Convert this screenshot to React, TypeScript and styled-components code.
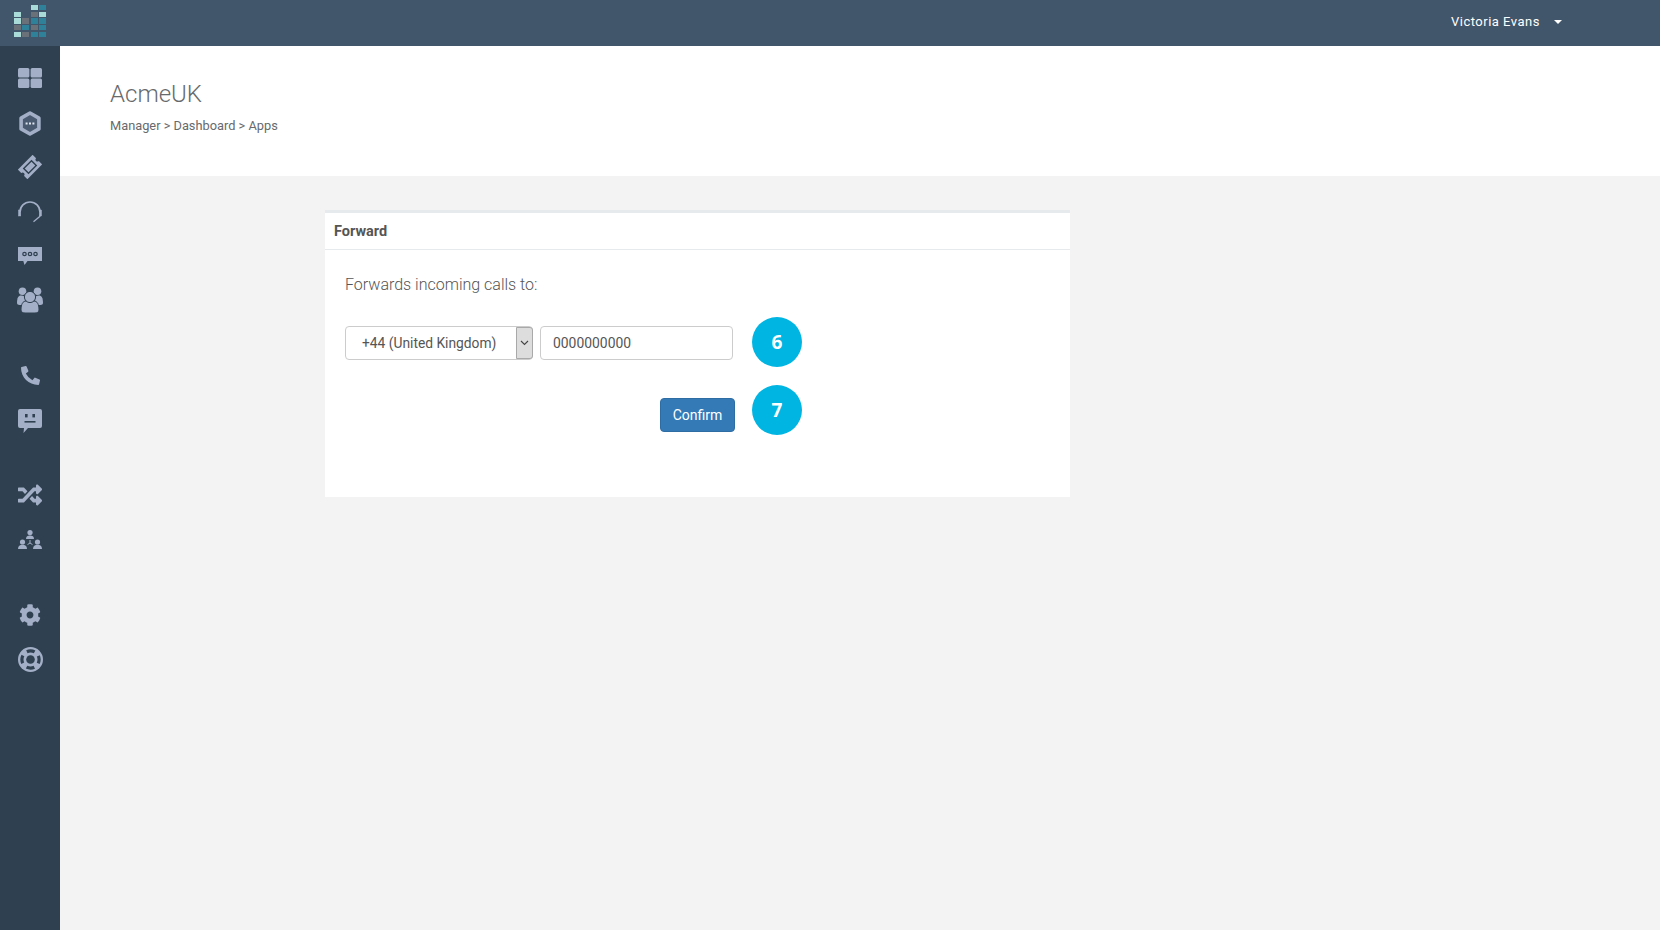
import React from "react";
import styled, { createGlobalStyle } from "styled-components";
import { FaCog, FaPhoneAlt, FaRandom } from "react-icons/fa";

const GlobalStyle = createGlobalStyle`
  html, body {
    margin: 0;
    padding: 0;
    height: 100%;
    overflow: hidden;
    background: #f3f3f4;
    font-family: Roboto, "Liberation Sans", sans-serif;
  }
`;

const Page = styled.div`
  display: flex;
  flex-direction: column;
  height: 930px;
`;

const TopBar = styled.header`
  flex: 0 0 46px;
  display: flex;
  align-items: center;
  justify-content: space-between;
  background: #42566b;
  padding-left: 14px;
  padding-right: 98px;
`;

const LogoGrid = styled.div`
  display: grid;
  grid-template-columns: repeat(4, 7px);
  grid-auto-rows: 5.5px;
  column-gap: 1.4px;
  row-gap: 1.2px;
  margin-bottom: 4px;
`;

const LogoCell = styled.span<{ $tone: string }>`
  background: ${(p) => p.$tone};
`;

const UserMenu = styled.div`
  display: flex;
  align-items: center;
  gap: 14px;
  margin-bottom: 3px;
  color: #fff;
  font-size: 13px;
  letter-spacing: 0.5px;
`;

const Caret = styled.span`
  width: 0;
  height: 0;
  border-left: 4px solid transparent;
  border-right: 4px solid transparent;
  border-top: 4px solid #fff;
`;

const Body = styled.div`
  flex: 1;
  display: flex;
  min-height: 0;
`;

const Sidebar = styled.nav`
  flex: 0 0 60px;
  display: flex;
  flex-direction: column;
  gap: 31px;
  padding-top: 10px;
  background: #2f4050;
`;

const NavGroup = styled.div`
  display: flex;
  flex-direction: column;
`;

const NavItem = styled.a`
  height: 44.4px;
  display: flex;
  align-items: center;
  justify-content: center;
  color: #a3afc6;
`;

const Main = styled.main`
  flex: 1;
  display: flex;
  flex-direction: column;
`;

const PageHeader = styled.div`
  height: 130px;
  box-sizing: border-box;
  padding: 33px 50px 0;
  background: #fff;
  color: #676a6c;
`;

const Title = styled.h1`
  margin: 0;
  font-size: 24px;
  font-weight: 300;
  line-height: 30px;
`;

const Breadcrumb = styled.div`
  margin-top: 8px;
  font-size: 12.8px;
  line-height: 18px;
`;

const Content = styled.div`
  padding: 34px 0 0 265px;
`;

const Card = styled.section`
  width: 745px;
  height: 287px;
  box-sizing: border-box;
  background: #fff;
  border-top: 3px solid #e7eaec;
`;

const CardTitle = styled.div`
  height: 37px;
  box-sizing: border-box;
  padding-left: 9px;
  border-bottom: 1px solid #e7eaec;
  font-size: 14.5px;
  font-weight: 700;
  line-height: 37px;
  color: #555;
`;

const CardBody = styled.div`
  padding: 24px 0 0 20px;
  color: #555;
`;

const Lead = styled.p`
  margin: 0 0 23px;
  font-size: 16px;
  font-weight: 300;
  line-height: 22px;
`;

const FieldRow = styled.div`
  display: flex;
  align-items: center;
`;

const ActionRow = styled.div`
  display: flex;
  align-items: flex-start;
  margin-top: 18px;
  padding-left: 315px;
`;

const SelectBox = styled.div`
  width: 188px;
  height: 34px;
  box-sizing: border-box;
  display: flex;
  border: 1px solid #ccc;
  border-radius: 4px;
  font-size: 13.8px;
  color: #555;
`;

const SelectValue = styled.div`
  flex: 1;
  padding-left: 16px;
  line-height: 32px;
`;

const SelectArrow = styled.div`
  width: 17px;
  box-sizing: border-box;
  display: flex;
  align-items: center;
  justify-content: center;
  background: #ddd;
  border: 1px solid #a9a9a9;
  border-radius: 0 3px 3px 0;
  margin: 0 -1px 0 0;
`;

const NumberInput = styled.input`
  width: 193px;
  height: 34px;
  box-sizing: border-box;
  margin-left: 7px;
  padding: 0 12px;
  border: 1px solid #ccc;
  border-radius: 4px;
  font-family: inherit;
  font-size: 13.9px;
  color: #555;
`;

const Badge = styled.div`
  flex: 0 0 50px;
  height: 50px;
  display: flex;
  align-items: center;
  justify-content: center;
  border-radius: 50%;
  background: #00b5e2;
  color: #fff;
  font-family: "Open Sans", sans-serif;
  font-size: 19px;
  font-weight: 700;
`;

const FieldBadge = styled(Badge)`
  margin-left: 19px;
  margin-top: -2px;
`;

const ActionBadge = styled(Badge)`
  margin-left: 17px;
`;

const ConfirmButton = styled.button`
  width: 75px;
  height: 34px;
  margin-top: 13px;
  padding: 0;
  background: #337ab7;
  border: 1px solid #2e6da4;
  border-radius: 4px;
  color: #fff;
  font-family: inherit;
  font-size: 14px;
`;

const L = "#a9dcd9";
const G = "#6b7178";
const T = "#2f8199";
const logoCells = [
  "", "", L, T,
  L, "", G, L,
  L, G, T, T,
  G, T, G, T,
  L, G, T, T,
];

const BG = "#2f4050";

const DashboardIcon = () => (
  <svg width="24" height="20" viewBox="0 0 24 20" fill="currentColor">
    <rect x="0" y="0" width="11.4" height="9.4" rx="1.5" />
    <rect x="12.6" y="0" width="11.4" height="9.4" rx="1.5" />
    <rect x="0" y="10.6" width="11.4" height="9.4" rx="1.5" />
    <rect x="12.6" y="10.6" width="11.4" height="9.4" rx="1.5" />
  </svg>
);

const HexIcon = () => (
  <svg width="22" height="27" viewBox="0 -2 22 27">
    <path d="M11 2 19.9 7.1v10.8L11 23 2.1 17.9V7.1z" fill="#4a5a70" stroke="currentColor" strokeWidth="3.6" strokeLinejoin="round" />
    <g fill="#dfe5ef">
      <rect x="6.6" y="11.5" width="2" height="2" />
      <rect x="10" y="11.5" width="2" height="2" />
      <rect x="13.4" y="11.5" width="2" height="2" />
    </g>
  </svg>
);

const TicketIcon = () => (
  <svg width="24" height="24" viewBox="0 0 24 24" fill="none">
    <g transform="rotate(-45 12 12)">
      <path
        d="M1.5 5.2h21v4.9a1.9 1.9 0 0 0 0 3.8v4.9h-21v-4.9a1.9 1.9 0 0 0 0-3.8z"
        fill="currentColor"
      />
      <rect x="6.5" y="8.6" width="11" height="6.8" stroke={BG} strokeWidth="1.4" />
    </g>
  </svg>
);

const HeadsetIcon = () => (
  <svg width="24" height="24" viewBox="0 -2 24 24" fill="none" stroke="currentColor">
    <path d="M2 11A10 10 0 0 1 22 11" strokeWidth="1.7" />
    <rect x="0.4" y="9" width="2.4" height="6" fill="currentColor" strokeWidth="0.4" />
    <rect x="21.2" y="9" width="2.4" height="6" fill="currentColor" strokeWidth="0.4" />
    <path d="M22.3 15 15.5 20.8" strokeWidth="1.2" />
  </svg>
);

const DotsChatIcon = () => (
  <svg width="24" height="18" viewBox="0 0 24 18">
    <path d="M0 0h24v14H9.5L6.5 18l-1.2-4H0z" fill="currentColor" />
    <g fill="none" stroke={BG} strokeWidth="1.2">
      <circle cx="6.5" cy="7" r="1.7" />
      <circle cx="12" cy="7" r="1.7" />
      <circle cx="17.5" cy="7" r="1.7" />
    </g>
  </svg>
);

const GroupIcon = () => (
  <svg width="26" height="26" viewBox="0 0 26 26" fill="currentColor">
    <circle cx="5.5" cy="4.2" r="3.8" />
    <circle cx="20.5" cy="4.2" r="3.8" />
    <path d="M0 16c0-5 1.5-7.4 4-7.4 2.8 0 4 1 4 3.4 0 2.6 0 5.2-2 6H2.5C1 18 0 17.2 0 16z" />
    <path d="M26 16c0-5-1.5-7.4-4-7.4-2.8 0-4 1-4 3.4 0 2.6 0 5.2 2 6h3.5c1.5 0 2.5-.8 2.5-2z" />
    <path d="M4 23c0-6 2-9 5-9h8c3 0 5 3 5 9 0 2-2 3-4 3H8c-2 0-4-1-4-3z" stroke={BG} strokeWidth="1" />
    <circle cx="13" cy="10" r="5.6" stroke={BG} strokeWidth="1" />
  </svg>
);

const FaceChatIcon = () => (
  <svg width="24" height="26" viewBox="0 -2 24 26">
    <path
      d="M2 0h20a2 2 0 0 1 2 2v15a2 2 0 0 1-2 2H10l-4.5 5 .5-5H2a2 2 0 0 1-2-2V2a2 2 0 0 1 2-2z"
      fill="currentColor"
    />
    <g fill={BG}>
      <rect x="7" y="5" width="2.6" height="3.4" />
      <rect x="14.4" y="5" width="2.6" height="3.4" />
      <rect x="6.5" y="12" width="11" height="1.6" />
    </g>
  </svg>
);

const TeamIcon = () => (
  <svg width="24" height="19" viewBox="0 0 24 19" fill="currentColor">
    <circle cx="12" cy="2.6" r="2.6" />
    <path d="M8 9c0-2.4 1.6-3.4 4-3.4s4 1 4 3.4z" />
    <circle cx="4.5" cy="12" r="2.6" />
    <path d="M0 19c0-3 1.8-4.2 4.5-4.2S9 16 9 19z" />
    <circle cx="19.5" cy="12" r="2.6" />
    <path d="M15 19c0-3 1.8-4.2 4.5-4.2S24 16 24 19z" />
    <path d="M12 10v3M12 13l-2.5 1.6M12 13l2.5 1.6" stroke="currentColor" strokeWidth="1" fill="none" />
  </svg>
);

const LifeRingIcon = () => (
  <svg width="25" height="25" viewBox="0 0 25 25" fill="none">
    <circle cx="12.5" cy="12.5" r="12.5" fill="currentColor" />
    <circle
      cx="12.5"
      cy="12.5"
      r="8.6"
      stroke={BG}
      strokeWidth="3.2"
      strokeDasharray="8 5.51"
      strokeDashoffset="4"
    />
    <circle cx="12.5" cy="12.5" r="4.3" fill={BG} />
  </svg>
);

const navGroups = [
  [
    <DashboardIcon />,
    <HexIcon />,
    <TicketIcon />,
    <HeadsetIcon />,
    <DotsChatIcon />,
    <GroupIcon />,
  ],
  [<FaPhoneAlt size={19} />, <FaceChatIcon />],
  [<FaRandom size={24} />, <TeamIcon />],
  [<FaCog size={22} />, <LifeRingIcon />],
];

const App = () => {
  return (
    <Page>
      <GlobalStyle />
      <TopBar>
        <LogoGrid>
          {logoCells.map((tone, i) => (
            <LogoCell key={i} $tone={tone || "transparent"} />
          ))}
        </LogoGrid>
        <UserMenu>
          Victoria Evans
          <Caret />
        </UserMenu>
      </TopBar>
      <Body>
        <Sidebar>
          {navGroups.map((group, g) => (
            <NavGroup key={g}>
              {group.map((icon, i) => (
                <NavItem key={i}>{icon}</NavItem>
              ))}
            </NavGroup>
          ))}
        </Sidebar>
        <Main>
          <PageHeader>
            <Title>AcmeUK</Title>
            <Breadcrumb>Manager &gt; Dashboard &gt; Apps</Breadcrumb>
          </PageHeader>
          <Content>
            <Card>
              <CardTitle>Forward</CardTitle>
              <CardBody>
                <Lead>Forwards incoming calls to:</Lead>
                <FieldRow>
                  <SelectBox>
                    <SelectValue>+44 (United Kingdom)</SelectValue>
                    <SelectArrow>
                      <svg width="9" height="6" viewBox="0 0 9 6" fill="none" stroke="#444" strokeWidth="1.1">
                        <path d="M1 1l3.5 3.5L8 1" />
                      </svg>
                    </SelectArrow>
                  </SelectBox>
                  <NumberInput value="0000000000" readOnly />
                  <FieldBadge>6</FieldBadge>
                </FieldRow>
                <ActionRow>
                  <ConfirmButton>Confirm</ConfirmButton>
                  <ActionBadge>7</ActionBadge>
                </ActionRow>
              </CardBody>
            </Card>
          </Content>
        </Main>
      </Body>
    </Page>
  );
};

export default App;
